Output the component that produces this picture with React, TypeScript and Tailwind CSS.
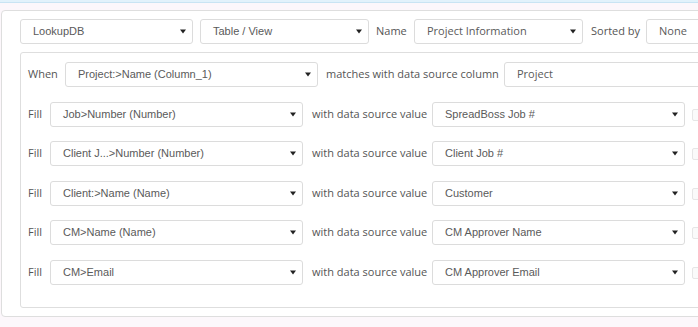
import React from 'react';

type FillRow = { field: string; value: string; gap: string };

const FILL_ROWS: FillRow[] = [
  { field: 'Job>Number (Number)', value: 'SpreadBoss Job #', gap: 'mt-[15px]' },
  { field: 'Client J...>Number (Number)', value: 'Client Job #', gap: 'mt-[14px]' },
  { field: 'Client:>Name (Name)', value: 'Customer', gap: 'mt-[15px]' },
  { field: 'CM>Name (Name)', value: 'CM Approver Name', gap: 'mt-[14px]' },
  { field: 'CM>Email', value: 'CM Approver Email', gap: 'mt-[15px]' },
];

const ARIAL = "font-['Liberation_Sans',Arial,sans-serif]";
const OPEN = "font-['Open_Sans',sans-serif]";

function Caret() {
  return (
    <svg width="6" height="5" viewBox="0 0 6 5" className="shrink-0">
      <polygon points="0,0.5 6,0.5 3,4.5" fill="#222" />
    </svg>
  );
}

/** Fake bootstrap-ish select box; width comes from the caller. */
function SelectBox({ label, width, font = ARIAL, caret = true }: { label: string; width: string; font?: string; caret?: boolean }) {
  return (
    <div
      className={`flex h-[25px] shrink-0 items-center justify-between rounded-[3px] border border-[#dcdcdc] bg-white pl-[12px] pr-[6px] text-[11px] text-[#5a5a5a] ${width} ${font}`}
    >
      <span className="whitespace-nowrap">{label}</span>
      {caret && <Caret />}
    </div>
  );
}

function Label({ text, className }: { text: string; className: string }) {
  return <span className={`shrink-0 whitespace-nowrap ${className}`}>{text}</span>;
}

export default function App() {
  return (
    <div className="h-[327px] w-[698px] overflow-hidden bg-[#fcf7fb]">
      <div className="h-[3px] border-b border-[#c9e4f3] bg-[#e2f2fb]" />

      <div className="ml-[1px] mt-[7px] w-[740px] rounded-[4px] border border-[#dedede] bg-white pb-[8px] pl-[18px] pt-[8px]">
        {/* source picker row */}
        <div className={`flex h-[25px] items-center text-[11px] text-[#555] ${OPEN}`}>
          <SelectBox label="LookupDB" width="w-[173px]" />
          <div className="w-[7px] shrink-0" />
          <SelectBox label="Table / View" width="w-[169px]" />
          <Label text="Name" className="ml-[7px] w-[38px]" />
          <SelectBox label="Project Information" width="w-[169px]" font={OPEN} />
          <Label text="Sorted by" className="ml-[8px] w-[55px]" />
          <SelectBox label="None" width="w-[120px]" font={OPEN} caret={false} />
        </div>

        {/* mapping panel */}
        <div className={`mt-[8px] w-[710px] rounded-[3px] border border-[#dedede] pb-[22px] pl-[7px] pt-[9px] text-[11px] text-[#555] ${OPEN}`}>
          <div className="flex h-[25px] items-center">
            <Label text="When" className="w-[37px]" />
            <SelectBox label="Project:>Name (Column_1)" width="w-[253px]" />
            <Label text="matches with data source column" className="ml-[8px] w-[178px]" />
            <SelectBox label="Project" width="w-[220px]" font={OPEN} caret={false} />
          </div>

          {FILL_ROWS.map((row) => (
            <div key={row.field} className={`flex h-[25px] items-center ${row.gap}`}>
              <Label text="Fill" className="w-[22px]" />
              <SelectBox label={row.field} width="w-[253px]" />
              <Label text="with data source value" className="ml-[9px] w-[120px]" />
              <SelectBox label={row.value} width="w-[253px]" />
              <div className="ml-[7px] h-[12px] w-[12px] shrink-0 rounded-[2px] border border-[#e6e6e6] bg-[#fafafa]" />
            </div>
          ))}
        </div>
      </div>
    </div>
  );
}
